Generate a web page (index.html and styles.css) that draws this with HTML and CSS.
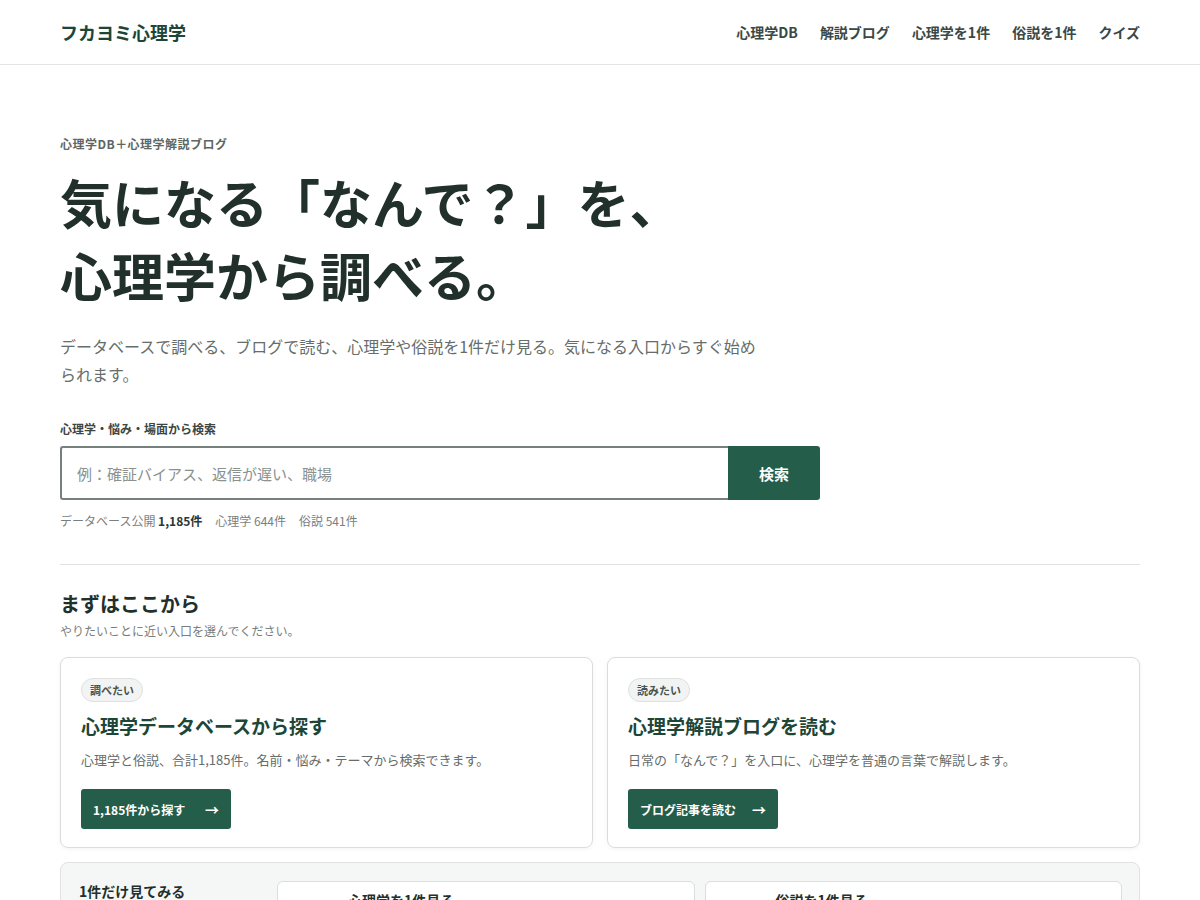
FILE: index.html
```html
<!DOCTYPE html>
<html lang="ja">
<head>
  <meta charset="UTF-8" />
  <meta name="viewport" content="width=device-width, initial-scale=1.0"/>
  <title>フカヨミ心理学</title>
  <link rel="stylesheet" href="styles.css">
</head>
<body>

<header class="site-header">
  <div class="wrap header-inner">
    <a class="logo" href="#">フカヨミ心理学</a>
    <nav class="nav">
      <a href="#">心理学DB</a>
      <a href="#">解説ブログ</a>
      <a href="#">心理学を1件</a>
      <a href="#">俗説を1件</a>
      <a href="#">クイズ</a>
    </nav>
  </div>
</header>

<main class="wrap">
  <section class="hero">
    <p class="eyebrow">心理学DB＋心理学解説ブログ</p>
    <h1>気になる「なんで？」を、<br>心理学から調べる。</h1>
    <p class="lead">データベースで調べる、ブログで読む、心理学や俗説を1件だけ見る。気になる入口からすぐ始められます。</p>

    <form class="search" onsubmit="return false;">
      <label for="q">心理学・悩み・場面から検索</label>
      <div class="search-row">
        <input type="text" id="q" placeholder="例：確証バイアス、返信が遅い、職場" />
        <button type="submit">検索</button>
      </div>
    </form>
    <p class="stats">データベース公開 <strong>1,185件</strong><span>心理学 644件</span><span>俗説 541件</span></p>
  </section>

  <section class="start">
    <h2>まずはここから</h2>
    <p class="sub">やりたいことに近い入口を選んでください。</p>

    <div class="cards">
      <div class="card">
        <span class="tag">調べたい</span>
        <h3>心理学データベースから探す</h3>
        <p>心理学と俗説、合計1,185件。名前・悩み・テーマから検索できます。</p>
        <a class="btn" href="#">1,185件から探す<span class="arrow">→</span></a>
      </div>
      <div class="card">
        <span class="tag">読みたい</span>
        <h3>心理学解説ブログを読む</h3>
        <p>日常の「なんで？」を入口に、心理学を普通の言葉で解説します。</p>
        <a class="btn" href="#">ブログ記事を読む<span class="arrow">→</span></a>
      </div>
    </div>

    <div class="pick">
      <h3>1件だけ見てみる</h3>
      <a class="pick-item" href="#">
        <span class="pick-icon"></span>
        <span class="pick-title">心理学を1件見る</span>
      </a>
      <a class="pick-item" href="#">
        <span class="pick-icon warm"></span>
        <span class="pick-title">俗説を1件見る</span>
      </a>
    </div>
  </section>
</main>

</body>
</html>
```

FILE: styles.css
```css
body {
  font-family: "Noto Sans CJK JP", "Noto Sans", sans-serif;
  background: #fff;
  margin: 0;
  padding: 0;
  color: #22302b;
}

a {
  text-decoration: none;
  color: inherit;
}

.wrap {
  max-width: 1080px;
  margin: 0 auto;
}

.site-header {
  border-bottom: 1px solid #e2e5e3;
}

.header-inner {
  height: 64px;
  display: flex;
  align-items: center;
  justify-content: space-between;
}

.logo {
  font-size: 18px;
  font-weight: 700;
  color: #1d4637;
}

.nav {
  display: flex;
  gap: 22px;
}

.nav a {
  font-size: 14px;
  font-weight: 700;
  color: #3b4843;
}

.hero {
  padding-top: 70px;
  padding-bottom: 35px;
  border-bottom: 1px solid #dfe2e0;
}

.eyebrow {
  margin: 0;
  font-size: 12px;
  font-weight: 700;
  color: #5c6763;
  letter-spacing: 0.04em;
}

h1 {
  margin: 14px 0 0;
  font-size: 52px;
  line-height: 1.4;
  font-weight: 700;
  color: #21302b;
}

.lead {
  margin: 20px 0 0;
  max-width: 700px;
  font-size: 16px;
  line-height: 1.8;
  color: #666d6a;
}

.search {
  margin-top: 31px;
  max-width: 760px;
}

.search label {
  display: block;
  font-size: 12px;
  font-weight: 700;
  color: #3c4643;
  margin-bottom: 9px;
}

.search-row {
  display: flex;
  height: 54px;
}

.search input {
  flex: 1;
  border: 2px solid #76807c;
  border-right: none;
  border-radius: 3px 0 0 3px;
  padding: 0 15px;
  font-family: inherit;
  font-size: 15px;
  color: #22302b;
  outline: none;
}

.search input::placeholder {
  color: #8a918e;
}

.search button {
  width: 92px;
  border: none;
  border-radius: 0 3px 3px 0;
  background: #245e4a;
  color: #fff;
  font-family: inherit;
  font-size: 15px;
  font-weight: 700;
  cursor: pointer;
}

.stats {
  margin: 12px 0 0;
  font-size: 12px;
  color: #7a807e;
}

.stats strong {
  color: #2b3632;
}

.stats span {
  margin-left: 13px;
}

.start {
  padding-top: 24px;
}

.start h2 {
  margin: 0;
  font-size: 20px;
  font-weight: 700;
  color: #22302b;
}

.sub {
  margin: 4px 0 0;
  font-size: 12px;
  color: #777d7b;
}

.cards {
  margin-top: 18px;
  display: grid;
  grid-template-columns: 1fr 1fr;
  gap: 14px;
}

.card {
  border: 1px solid #d9dddb;
  border-radius: 8px;
  padding: 18px 20px 18px;
  box-shadow: 0 1px 4px rgba(0,0,0,0.05);
}

.tag {
  display: inline-block;
  font-size: 11px;
  font-weight: 700;
  color: #4a5551;
  background: #f2f4f3;
  border: 1px solid #dde1df;
  border-radius: 999px;
  padding: 3px 8px;
  line-height: 16px;
}

.card h3 {
  margin: 10px 0 0;
  font-size: 19px;
  font-weight: 700;
  color: #1d4637;
}

.card p {
  margin: 11px 0 0;
  font-size: 13px;
  color: #666d6a;
}

.btn {
  display: flex;
  align-items: center;
  justify-content: space-between;
  box-sizing: border-box;
  width: 150px;
  margin-top: 20px;
  height: 40px;
  padding: 0 12px;
  background: #245e4a;
  color: #fff;
  border-radius: 3px;
  font-size: 12px;
  font-weight: 700;
}

.btn .arrow {
  font-size: 14px;
}

.pick {
  margin-top: 14px;
  display: grid;
  grid-template-columns: 188px 1fr 1fr;
  gap: 10px;
  padding: 18px 17px 20px 18px;
  background: #f5f7f6;
  border: 1px solid #e0e3e1;
  border-radius: 8px;
}

.pick h3 {
  margin: 0;
  font-size: 14px;
  font-weight: 700;
  color: #22302b;
}

.pick-item {
  display: flex;
  gap: 14px;
  align-items: flex-start;
  background: #fff;
  border: 1px solid #dadedc;
  border-radius: 6px;
  padding: 8px 12px;
}

.pick-icon {
  width: 44px;
  height: 44px;
  margin-top: 10px;
  border-radius: 6px;
  background: #eef3f0;
}

.pick-icon.warm {
  background: #fbefea;
}

.pick-title {
  font-size: 14px;
  font-weight: 700;
  color: #22302b;
}
```
